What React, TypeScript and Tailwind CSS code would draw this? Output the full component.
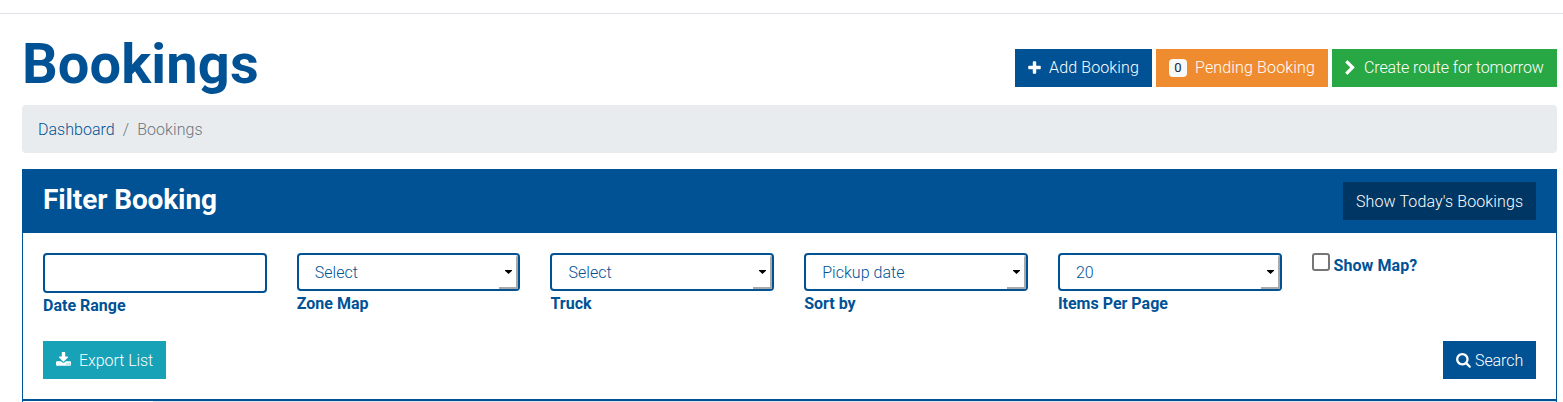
import type { ReactNode } from "react";

const PLUS =
  "M1600 736v192q0 40-28 68t-68 28h-416v416q0 40-28 68t-68 28h-192q-40 0-68-28t-28-68v-416h-416q-40 0-68-28t-28-68v-192q0-40 28-68t68-28h416v-416q0-40 28-68t68-28h192q40 0 68 28t28 68v416h416q40 0 68 28t28 68z";
const CHEVRON =
  "M1363 877l-742 742q-19 19-45 19t-45-19l-166-166q-19-19-19-45t19-45l531-531-531-531q-19-19-19-45t19-45l166-166q19-19 45-19t45 19l742 742q19 19 19 45t-19 45z";
const DOWNLOAD =
  "M1344 1344q0-26-19-45t-45-19-45 19-19 45 19 45 45 19 45-19 19-45zm256 0q0-26-19-45t-45-19-45 19-19 45 19 45 45 19 45-19 19-45zm128-224v320q0 40-28 68t-68 28h-1472q-40 0-68-28t-28-68v-320q0-40 28-68t68-28h465l135 136q58 56 136 56t136-56l136-136h464q40 0 68 28t28 68zm-325-569q17 41-14 70l-448 448q-18 19-45 19t-45-19l-448-448q-31-29-14-70 17-39 59-39h256v-448q0-26 19-45t45-19h256q26 0 45 19t19 45v448h256q42 0 59 39z";
const SEARCH =
  "M1216 832q0-185-131.5-316.5t-316.5-131.5-316.5 131.5-131.5 316.5 131.5 316.5 316.5 131.5 316.5-131.5 131.5-316.5zm512 832q0 52-38 90t-90 38q-54 0-90-38l-343-342q-179 124-399 124-143 0-273.5-55.5t-225-150-150-225-55.5-273.5 55.5-273.5 150-225 225-150 273.5-55.5 273.5 55.5 225 150 150 225 55.5 273.5q0 220-124 399l343 343q37 37 37 90z";

function Icon({ d, viewBox, className }: { d: string; viewBox: string; className: string }) {
  return (
    <svg viewBox={viewBox} className={`shrink-0 fill-current ${className}`} aria-hidden="true">
      <path d={d} />
    </svg>
  );
}

function Button({ className, children }: { className: string; children: ReactNode }) {
  return (
    <button className={`flex h-[38px] items-center px-[13px] whitespace-nowrap text-white ${className}`}>
      {children}
    </button>
  );
}

function SelectField({ label, value }: { label: string; value: string }) {
  return (
    <div>
      <div className="flex h-[38px] items-stretch justify-between rounded-[4px] border-2 border-[#005295] pl-4">
        <span className="self-center pt-0.5 tracking-[0.04px]">{value}</span>
        <span className="flex w-[19px] items-center border-t-2 border-r-2 border-b-2 border-[#a9a9a9] border-t-transparent">
          <svg viewBox="0 0 7 4" className="ml-1.5 h-1 w-[7px]" aria-hidden="true">
            <path d="M0 0h7v.8L3.5 4 0 .8z" fill="#000" />
          </svg>
        </span>
      </div>
      <label className="block pt-px font-bold">{label}</label>
    </div>
  );
}

export default function App() {
  return (
    <div className="h-[402px] overflow-hidden bg-white pt-[13px] font-['Roboto',sans-serif] text-base leading-6 font-light text-[#005295]">
      <div className="border-t border-[#dee2e6] pr-1.5 pl-[22px]">
        <header className="flex h-[91px] items-start justify-between">
          <h1 className="mt-[17px] text-[56px] leading-[67px] font-bold tracking-[0.12px]">Bookings</h1>
          <div className="mt-[35px] flex gap-1">
            <Button className="w-[137px] bg-[#005295] tracking-[0.13px]">
              <Icon d={PLUS} viewBox="192 0 1408 1792" className="mr-2 h-4 w-[13px]" />
              Add Booking
            </Button>
            <Button className="w-[172px] bg-[#f08c30] tracking-[0.15px]">
              <span className="mr-2 flex h-[18px] w-[18px] items-center justify-center rounded-[4px] bg-[#f8f9fa] text-[13px] leading-3 font-normal tracking-normal text-[#212529]">
                0
              </span>
              Pending Booking
            </Button>
            <Button className="w-[225px] bg-[#28a745] tracking-[-0.11px]">
              <Icon d={CHEVRON} viewBox="346 0 1152 1792" className="mr-2 h-4 w-[11px]" />
              Create route for tomorrow
            </Button>
          </div>
        </header>

        <nav className="mb-4 flex h-12 items-center rounded-[4px] bg-[#e9ecef] px-4 pt-0.5">
          <a className="tracking-[0.03px]">Dashboard</a>
          <span className="px-2 text-[#6c757d]">/</span>
          <span className="tracking-[0.06px] text-[#6c757d]">Bookings</span>
        </nav>

        <section className="h-[232px] border-x border-b-2 border-[#005295]">
          <div className="flex h-16 items-start justify-between bg-[#005295] px-5 text-white">
            <h2 className="mt-[14px] text-[28px] leading-[34px] font-bold tracking-[-0.12px]">Filter Booking</h2>
            <Button className="mt-[13px] w-[193px] bg-[#003663] pt-0.5 tracking-[0.11px]">Show Today's Bookings</Button>
          </div>
          <div className="px-5 pt-5">
            <div className="grid h-[88px] grid-cols-6 gap-[30px] pr-[0.7px]">
              <div>
                <input
                  aria-label="Date Range"
                  className="block h-10 w-full rounded-[4px] border-2 border-[#005295] px-4"
                />
                <label className="block pt-px font-bold">Date Range</label>
              </div>
              <SelectField label="Zone Map" value="Select" />
              <SelectField label="Truck" value="Select" />
              <SelectField label="Sort by" value="Pickup date" />
              <SelectField label="Items Per Page" value="20" />
              <label className="flex items-start gap-1 font-bold">
                <span className="h-[18px] w-[18px] rounded-[3px] border-2 border-[#767676] bg-white" />
                <span className="pt-px tracking-[0.06px]">Show Map?</span>
              </label>
            </div>
            <div className="flex justify-between">
              <Button className="w-[123px] bg-[#17a2b8] pt-0.5 tracking-[-0.06px]">
                <Icon d={DOWNLOAD} viewBox="64 0 1664 1792" className="mr-2 mb-0.5 h-4 w-[15px]" />
                Export List
              </Button>
              <Button className="w-[93px] bg-[#005295] pt-0.5 tracking-[-0.08px]">
                <Icon d={SEARCH} viewBox="64 128 1664 1792" className="mr-1 h-4 w-[15px]" />
                Search
              </Button>
            </div>
          </div>
        </section>
        <div className="h-px border-x border-[#005295] pl-[130px]">
          <div className="h-px bg-[#d3e2ee]" />
        </div>
      </div>
    </div>
  );
}
